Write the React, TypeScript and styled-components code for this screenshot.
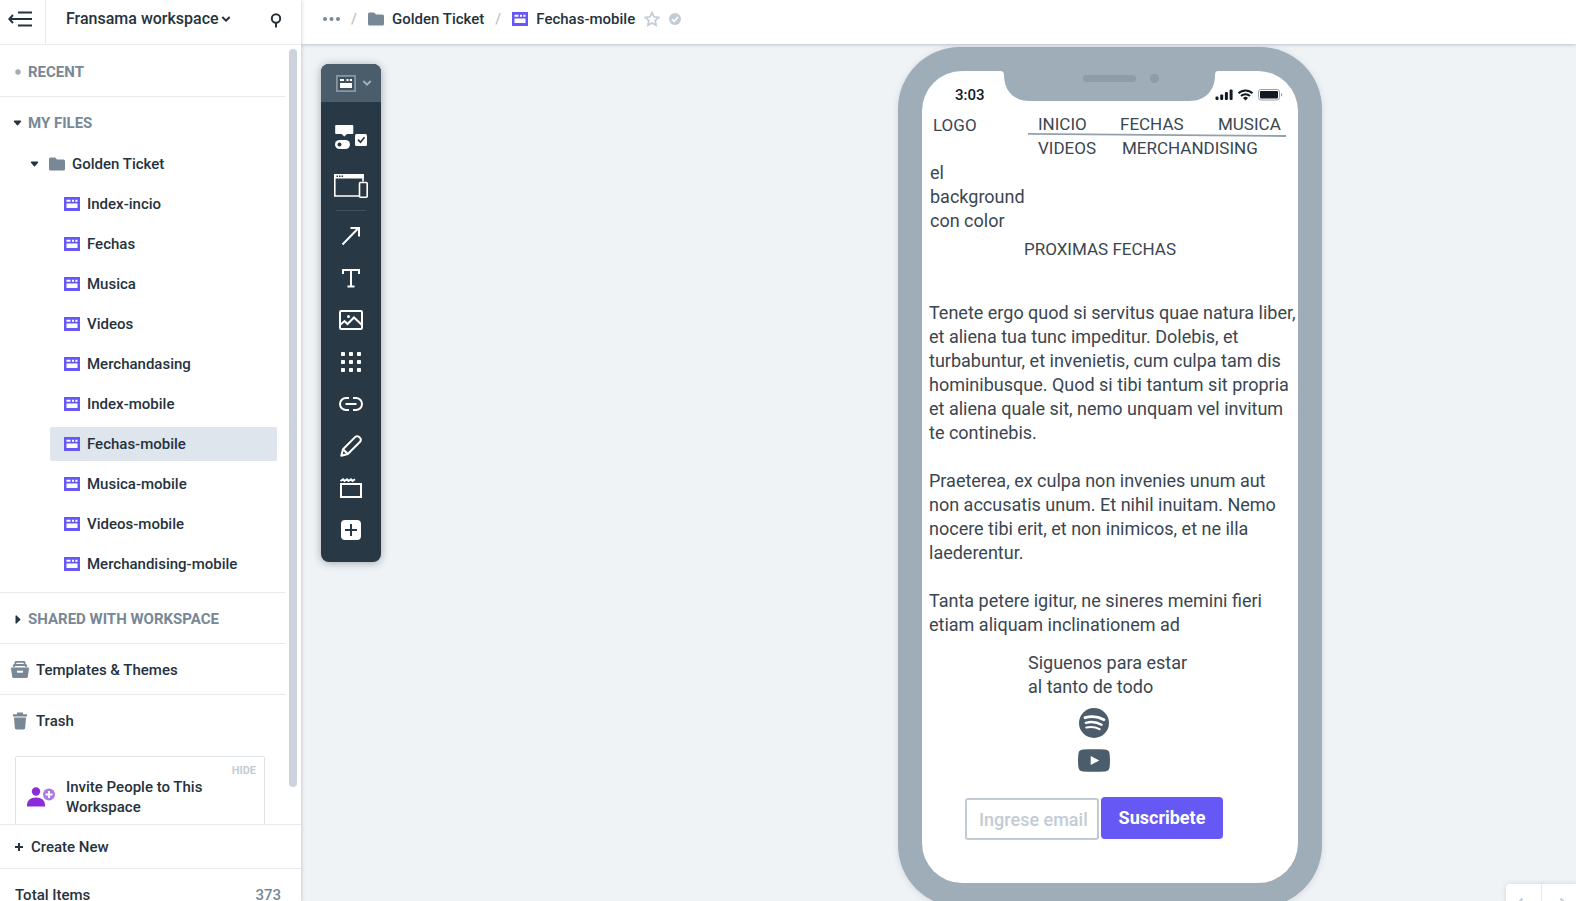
import React from "react";
import styled, { createGlobalStyle } from "styled-components";

const color = {
  ink: "#26323d",
  body: "#3a4650",
  slate: "#788896",
  mute: "#c3ccd4",
  line: "#e6eaee",
  canvas: "#eff3f6",
  tool: "#293845",
  toolHead: "#4b5c6a",
  frame: "#9fadb9",
  purple: "#6558f5",
};

const GlobalStyle = createGlobalStyle`
  * { box-sizing: border-box; }
  body {
    margin: 0;
    overflow: hidden;
    font-family: Roboto, "Liberation Sans", sans-serif;
    font-size: 15px;
    line-height: 20px;
    color: ${color.ink};
  }
  button, input { font: inherit; color: inherit; }
  button { border: 0; padding: 0; background: none; cursor: pointer; }
  a { color: inherit; text-decoration: none; }
  svg { display: block; flex: none; }
  ul, h1, h2, p { margin: 0; padding: 0; list-style: none; font-size: inherit; font-weight: inherit; }
`;

const Workspace = styled.div`
  display: grid;
  grid-template-columns: 301px minmax(0, 1fr);
  height: 100vh;
  overflow: hidden;
  background: ${color.canvas};
`;

/* ---------- sidebar ---------- */

const Sidebar = styled.aside`
  position: relative;
  z-index: 2;
  display: flex;
  flex-direction: column;
  min-height: 0;
  font-weight: 500;
  background: #fff;
  box-shadow: 0 0 4px rgba(40, 56, 70, 0.28);
`;

const SideHeader = styled.header`
  display: flex;
  flex: none;
  align-items: stretch;
  height: 45px;
  border-bottom: 1px solid ${color.line};
`;

const CollapseButton = styled.button`
  display: grid;
  place-items: center;
  width: 46px;
  padding-right: 6px;
  padding-bottom: 6px;
  border-right: 1px solid ${color.line};
`;

const WorkspaceButton = styled.button`
  display: flex;
  flex: 1;
  align-items: center;
  gap: 2px;
  padding: 0 0 6px 20px;
  font-size: 16px;
  font-weight: 500;
  white-space: nowrap;
`;

const SearchButton = styled.button`
  display: grid;
  place-items: center;
  width: 50px;
  padding-bottom: 3px;
`;

const ScrollArea = styled.div`
  display: flex;
  flex: 1;
  min-height: 0;
  overflow: hidden;
`;

const FileList = styled.nav`
  flex: 1;
  min-width: 0;
  padding-top: 1px;
`;

const ScrollTrack = styled.div`
  width: 16px;
  padding: 4px 4px 37px 4px;
`;

const ScrollThumb = styled.div`
  height: 100%;
  border-radius: 4px;
  background: #ccd3da;
`;

const Section = styled.section<{ $last?: boolean }>`
  border-bottom: ${(p) => (p.$last ? "0" : `1px solid ${color.line}`)};
`;

const SectionTitle = styled.button`
  display: flex;
  align-items: center;
  gap: 5px;
  width: 100%;
  height: 50px;
  padding-left: 12px;
  padding-top: 2px;
  color: ${color.slate};
  font-weight: 700;
  text-align: left;
`;

const Marker = styled.span`
  display: grid;
  place-items: center;
  width: 11px;
  height: 20px;
`;

const FolderRow = styled.button`
  display: flex;
  align-items: center;
  width: 100%;
  height: 34px;
  padding-left: 29px;
  font-weight: 500;

  svg + svg { margin: 0 7px 0 9px; }
`;

const Files = styled.ul`
  display: flex;
  flex-direction: column;
  gap: 6px;
  padding: 6px 8px 11px 50px;
`;

const FileLink = styled.a<{ $active?: boolean }>`
  display: flex;
  align-items: center;
  gap: 7px;
  height: 34px;
  padding-left: 14px;
  border-radius: 2px;
  background: ${(p) => (p.$active ? "#dfe5ed" : "transparent")};
`;

const UtilityLink = styled.a`
  display: flex;
  align-items: center;
  gap: 7px;
  height: 50px;
  padding-left: 11px;
  padding-top: 2px;
`;

const InviteCard = styled.div`
  display: grid;
  grid-template-columns: 28px 1fr;
  column-gap: 11px;
  width: 250px;
  margin: 11px 0 0 15px;
  padding: 6px 8px 20px 11px;
  border: 1px solid #dde3e8;
  border-radius: 2px;
`;

const HideButton = styled.button`
  grid-column: 1 / -1;
  justify-self: end;
  height: 14px;
  color: ${color.mute};
  font-size: 11px;
  font-weight: 700;
  line-height: 16px;
`;

const InviteText = styled.a`
  grid-column: 2;
`;

const InviteIconCell = styled.span`
  display: grid;
  align-items: center;
`;

const SideFooter = styled.footer`
  flex: none;
  height: 77px;
`;

const CreateButton = styled.button`
  display: flex;
  align-items: center;
  gap: 8px;
  width: 100%;
  height: 44px;
  padding-left: 15px;
  border-top: 1px solid ${color.line};
  font-weight: 500;
`;

const Totals = styled.div`
  display: flex;
  justify-content: space-between;
  padding: 16px 20px 0 15px;
  border-top: 1px solid ${color.line};

  span + span { color: ${color.slate}; }
`;

/* ---------- main area ---------- */

const Main = styled.main`
  display: flex;
  flex-direction: column;
  min-height: 0;
`;

const TopBar = styled.header`
  position: relative;
  z-index: 1;
  display: flex;
  flex: none;
  align-items: center;
  height: 44px;
  padding: 0 0 6px 22px;
  background: #fff;
  box-shadow: 0 1px 3px rgba(40, 56, 70, 0.25);
  font-weight: 500;
`;

const Crumb = styled.a`
  display: flex;
  align-items: center;
  gap: 8px;
`;

const Slash = styled.span`
  width: 28px;
  color: #bcc4cb;
  text-align: center;
`;

const CrumbAction = styled.button`
  margin-left: 9px;
`;

const Canvas = styled.div`
  position: relative;
  flex: 1;
  min-height: 0;
  overflow: hidden;
`;

const Toolbar = styled.div`
  position: absolute;
  top: 20px;
  left: 20px;
  display: flex;
  flex-direction: column;
  align-items: stretch;
  width: 60px;
  padding-bottom: 11px;
  border-radius: 8px;
  background: ${color.tool};
  box-shadow: 0 1px 8px rgba(40, 56, 70, 0.4);
  color: #fff;
`;

const ModeButton = styled.button`
  display: flex;
  align-items: center;
  gap: 6px;
  height: 38px;
  padding-left: 15px;
  border-radius: 8px 8px 0 0;
  background: ${color.toolHead};
`;

const Tool = styled.button<{ $tall?: boolean }>`
  display: flex;
  align-items: center;
  justify-content: ${(p) => (p.$tall ? "flex-start" : "center")};
  height: ${(p) => (p.$tall ? "49px" : "42px")};
  margin: ${(p) => (p.$tall ? "0 -2px" : "0")};
`;

const ToolGroup = styled.div`
  display: flex;
  flex-direction: column;
  margin: 0 15px;
  padding-top: 10px;
  border-bottom: 1px solid #42515e;

  & + & {
    padding-top: 4px;
    border: 0;
  }
`;

const Phone = styled.article`
  position: absolute;
  top: 3px;
  left: 597px;
  width: 424px;
  padding: 24px;
  border-radius: 62px;
  background: ${color.frame};
  box-shadow: 0 1px 6px rgba(40, 56, 70, 0.14);
`;

const Screen = styled.div`
  position: relative;
  height: 812px;
  border-radius: 40px;
  background: #fff;
  color: ${color.body};
  font-size: 18px;
  line-height: 24px;
`;

const Notch = styled.svg`
  position: absolute;
  top: 0;
  left: 78px;
`;

const StatusBar = styled.div`
  display: flex;
  align-items: center;
  justify-content: space-between;
  height: 41px;
  padding: 6px 15px 0 33px;
  color: #111a22;
  font-size: 15px;
  font-weight: 500;
`;

const SiteHeader = styled.div`
  position: relative;
  display: flex;
  padding: 0 0 0 11px;
  font-size: 17px;
`;

const Logo = styled.h1`
  width: 105px;
  padding-top: 1px;
`;

const MenuGrid = styled.div`
  display: flex;
  flex-direction: column;
`;

const MenuRow = styled.div<{ $cols: string }>`
  display: grid;
  grid-template-columns: ${(p) => p.$cols};
`;

const MenuRule = styled.svg`
  position: absolute;
  top: 20px;
  left: 106px;
`;

const Note = styled.p`
  padding: 1px 8px 0;
`;

const Heading = styled.h2`
  padding: 4px 0 0 102px;
  font-size: 17px;
`;

const Copy = styled.div`
  display: flex;
  flex-direction: column;
  gap: 24px;
  padding: 40px 0 0 7px;
  white-space: nowrap;
`;

const Follow = styled.p`
  padding: 14px 0 0 106px;
`;

const Socials = styled.div`
  display: flex;
  flex-direction: column;
  align-items: center;
  gap: 11px;
  width: 344px;
  padding-top: 9px;
`;

const Form = styled.form`
  display: flex;
  align-items: flex-start;
  gap: 2px;
  padding: 25px 0 0 43px;
`;

const EmailInput = styled.input`
  width: 134px;
  height: 42px;
  margin-top: 1px;
  padding: 0 0 0 12px;
  border: 2px solid ${color.mute};
  border-radius: 3px;
  background: #fff;
  font-weight: 500;

  &::placeholder { color: ${color.mute}; opacity: 1; }
`;

const SubmitButton = styled.button`
  width: 122px;
  height: 42px;
  border-radius: 4px;
  background: ${color.purple};
  color: #fff;
  font-weight: 700;
`;

const History = styled.div`
  position: absolute;
  right: 0;
  bottom: -21px;
  display: flex;
  border-radius: 4px 0 0 0;
  background: #fff;
  box-shadow: 0 0 5px rgba(40, 56, 70, 0.16);
`;

const HistoryButton = styled.button`
  display: grid;
  place-items: center;
  width: 35px;
  height: 38px;

  & + & { border-left: 1px solid ${color.line}; }
`;

/* ---------- icons ---------- */

const BoardIcon = () => (
  <svg width="16" height="14" viewBox="0 0 16 14" fill="#fff">
    <rect width="16" height="14" fill={color.purple} />
    <path d="M2.5 2.8h4v1.9h-4zM8 2.8h2v1.9H8zM11.3 2.8h2.2v1.9h-2.2zM2.5 6.6h11V11h-11z" />
  </svg>
);

const FolderIcon = () => (
  <svg width="16" height="14" viewBox="0 0 16 14" fill={color.slate}>
    <path d="M1.5 0.5H6l2 2h6.500a1.500 1.500 0 0 1 1.500 1.500v8a1.500 1.500 0 0 1-1.500 1.500h-13A1.500 1.500 0 0 1 0 12V2A1.500 1.500 0 0 1 1.500.5z" />
  </svg>
);

const Down = () => (
  <svg width="11" height="6" viewBox="0 0 11 6" fill={color.ink}>
    <path d="M2.500 0.500h6a.7.7 0 0 1 .5 1.200L6 5.300a.7.7 0 0 1-1 0L2 1.700A.7.7 0 0 1 2.500 .5z" />
  </svg>
);

const Right = () => (
  <svg width="6" height="9" viewBox="0 0 6 9" fill={color.ink}>
    <path d="M.5 1v7a.6.6 0 0 0 1 .5L5.200 5a.7.7 0 0 0 0-1L1.500.5a.6.6 0 0 0-1 .5z" />
  </svg>
);

const Chevron = ({ stroke }: { stroke: string }) => (
  <svg width="10" height="10" viewBox="0 0 10 10" fill="none" stroke={stroke} strokeWidth="2">
    <path d="M1.300 3 5 6.700 8.700 3" />
  </svg>
);

const SpotifyIcon = () => (
  <svg width="30" height="30" viewBox="0 0 30 30" fill="none" stroke="#fff" strokeLinecap="round">
    <circle cx="15" cy="15" r="15" fill="#4b5c6a" stroke="none" />
    <path d="M6 9.700c6.500-1.800 13.500-1 19 2" strokeWidth="2.800" />
    <path d="M6.800 14.800c5.500-1.500 11.200-.8 15.800 1.900" strokeWidth="2.400" />
    <path d="M7.300 19.500c4.800-1 9.300-.5 13.300 1.700" strokeWidth="2" />
  </svg>
);

const YoutubeIcon = () => (
  <svg width="32" height="23" viewBox="0 0 32 23">
    <path d="M5 .6C12 0 20 0 27 .6c3 .3 4.300 1.500 4.600 4.400.5 4.500.5 8.500 0 13-.3 2.900-1.600 4.100-4.600 4.400-7 .6-15 .6-22 0-3-.3-4.300-1.500-4.600-4.400-.5-4.500-.5-8.500 0-13C.7 2.100 2 .9 5 .6z" fill="#4b5c6a" />
    <path d="M12.700 7v9l8.600-4.500z" fill="#fff" />
  </svg>
);

const StatusIcons = () => (
  <svg width="68" height="14" viewBox="0 0 68 14" fill="#111a22">
    <rect x="0.500" y="8.500" width="3" height="3.500" rx="1" />
    <rect x="5.200" y="6.500" width="3" height="5.500" rx="1" />
    <rect x="9.900" y="4" width="3" height="8" rx="1" />
    <rect x="14.600" y="1.500" width="3" height="10.500" rx="1" />
    <g fill="none" stroke="#111a22" strokeWidth="1.900">
      <path d="M23.500 5.300a10 10 0 0 1 14 0" />
      <path d="M26 8a6.500 6.500 0 0 1 9 0" />
    </g>
    <path d="M28 10a3.700 3.700 0 0 1 5 0l-2.500 2.500z" />
    <rect x="43.500" y="1.500" width="21" height="10.500" rx="2.500" fill="none" stroke="#9aa3ab" />
    <rect x="45" y="3" width="18" height="7.500" rx="1" />
    <path d="M66 5v3.500c1-.3 1.300-1 1.300-1.700S67 5.300 66 5z" fill="#9aa3ab" />
  </svg>
);

const tools: { label: string; icon: React.ReactNode }[] = [
  {
    label: "Arrow",
    icon: (
      <svg width="20" height="20" viewBox="0 0 20 20" fill="none" stroke="#fff" strokeWidth="2">
        <path d="M1.500 18.500 17.500 2M9.500 2h8.500v8.500" />
      </svg>
    ),
  },
  {
    label: "Text",
    icon: (
      <svg width="20" height="20" viewBox="0 0 20 20" fill="none" stroke="#fff" strokeWidth="2">
        <path d="M2 6V2h16v4M10 2v16.500M6.500 18.500h7" />
      </svg>
    ),
  },
  {
    label: "Image",
    icon: (
      <svg width="24" height="20" viewBox="0 0 24 20" fill="none" stroke="#fff" strokeWidth="2">
        <rect x="1" y="1" width="22" height="18" rx="1.200" />
        <path d="m1.500 14.500 4-3.500 3 3 6.500-6.500 8 7.500" />
        <circle cx="9.500" cy="6.500" r="1.500" fill="#fff" stroke="none" />
      </svg>
    ),
  },
  {
    label: "Icons",
    icon: (
      <svg width="20" height="20" viewBox="0 0 20 20" fill="#fff">
        {[0, 8, 16].map((y) => [0, 8, 16].map((x) => <rect key={`${x}-${y}`} x={x} y={y} width="4" height="4" rx="0.800" />))}
      </svg>
    ),
  },
  {
    label: "Link",
    icon: (
      <svg width="24" height="14" viewBox="0 0 24 14" fill="none" stroke="#fff" strokeWidth="2">
        <path d="M10 1H7a6 6 0 0 0 0 12h3M14 1h3a6 6 0 0 1 0 12h-3" />
        <path d="M6.500 7h11" />
      </svg>
    ),
  },
  {
    label: "Draw",
    icon: (
      <svg width="22" height="22" viewBox="0 0 22 22" fill="none" stroke="#fff" strokeWidth="2" strokeLinejoin="round">
        <path d="M1.300 20.700 3 14.200 15.300 1.900a2.600 2.600 0 0 1 3.700 0l1.100 1.100a2.600 2.600 0 0 1 0 3.700L7.800 19z" />
        <path d="m3 14.200 4.800 4.800" />
      </svg>
    ),
  },
  {
    label: "Section",
    icon: (
      <svg width="24" height="20" viewBox="0 0 24 20" fill="none" stroke="#fff" strokeWidth="2">
        <rect x="2" y="6" width="20" height="13" />
        <path d="m1.500 3 2.500-1.700 1.500 1.700L8 1.300 9.500 3 12 1.300 13.500 3 16 1.300" strokeWidth="1.900" />
      </svg>
    ),
  },
  {
    label: "More",
    icon: (
      <svg width="20" height="20" viewBox="0 0 20 20">
        <rect width="20" height="20" rx="4" fill="#fff" />
        <path d="M10 4v12M4 10h12" stroke={color.tool} strokeWidth="2" />
      </svg>
    ),
  },
];

const files = [
  "Index-incio",
  "Fechas",
  "Musica",
  "Videos",
  "Merchandasing",
  "Index-mobile",
  "Fechas-mobile",
  "Musica-mobile",
  "Videos-mobile",
  "Merchandising-mobile",
];

const copy = [
  [
    "Tenete ergo quod si servitus quae natura liber,",
    "et aliena tua tunc impeditur. Dolebis, et",
    "turbabuntur, et invenietis, cum culpa tam dis",
    "hominibusque. Quod si tibi tantum sit propria",
    "et aliena quale sit, nemo unquam vel invitum",
    "te continebis.",
  ],
  [
    "Praeterea, ex culpa non invenies unum aut",
    "non accusatis unum. Et nihil inuitam. Nemo",
    "nocere tibi erit, et non inimicos, et ne illa",
    "laederentur.",
  ],
  ["Tanta petere igitur, ne sineres memini fieri", "etiam aliquam inclinationem ad"],
];

const Lines = ({ lines }: { lines: string[] }) => (
  <>
    {lines.map((line, i) => (
      <React.Fragment key={line}>
        {i > 0 && <br />}
        {line}
      </React.Fragment>
    ))}
  </>
);

const SidePanel = () => (
  <Sidebar>
    <SideHeader>
      <CollapseButton aria-label="Collapse sidebar">
        <svg width="24" height="16" viewBox="0 0 24 16" fill="none" stroke={color.ink} strokeWidth="2">
          <path d="M10 1.500h14M1.500 8H24M10 14.500h14M5 4 1.300 8 5 12" />
        </svg>
      </CollapseButton>
      <WorkspaceButton>
        Fransama workspace <Chevron stroke={color.ink} />
      </WorkspaceButton>
      <SearchButton aria-label="Search">
        <svg width="12" height="15" viewBox="0 0 12 15" fill="none" stroke={color.ink} strokeWidth="2">
          <circle cx="6" cy="5.500" r="4.200" />
          <path d="M6 9.500V14.500" />
        </svg>
      </SearchButton>
    </SideHeader>

    <ScrollArea>
      <FileList aria-label="Files">
        <Section>
          <SectionTitle>
            <Marker>
              <svg width="6" height="6" viewBox="0 0 6 6">
                <circle cx="3" cy="3" r="2.700" fill="#a3adb6" />
              </svg>
            </Marker>
            RECENT
          </SectionTitle>
        </Section>
        <Section>
          <SectionTitle>
            <Marker>
              <Down />
            </Marker>
            MY FILES
          </SectionTitle>
          <FolderRow>
            <Down />
            <FolderIcon />
            Golden Ticket
          </FolderRow>
          <Files>
            {files.map((name) => (
              <li key={name}>
                <FileLink href="#" $active={name === "Fechas-mobile"}>
                  <BoardIcon />
                  {name}
                </FileLink>
              </li>
            ))}
          </Files>
        </Section>
        <Section>
          <SectionTitle>
            <Marker>
              <Right />
            </Marker>
            SHARED WITH WORKSPACE
          </SectionTitle>
        </Section>
        <Section>
          <UtilityLink href="#">
            <svg width="18" height="18" viewBox="0 0 18 18" fill={color.slate}>
              <path d="M5 0h8a1.500 1.500 0 0 1 1.500 1.500V3h-1.800V1.800H5.300V3H3.500V1.500A1.500 1.500 0 0 1 5 0z" />
              <path d="M3.500 3h11A1.500 1.500 0 0 1 16 4.500V6h-2V4.900H4V6H2V4.500A1.500 1.500 0 0 1 3.500 3z" />
              <path d="M.8 6.500h16.400a.8.8 0 0 1 .8.900l-1.200 8.300A1.500 1.500 0 0 1 15.300 17H2.700a1.500 1.500 0 0 1-1.500-1.300L0 7.400a.8.8 0 0 1 .8-.9z" />
              <rect x="6" y="9.700" width="6" height="2" fill="#fff" />
            </svg>
            Templates &amp; Themes
          </UtilityLink>
        </Section>
        <Section $last>
          <UtilityLink href="#">
            <svg width="18" height="18" viewBox="0 0 18 18" fill={color.slate}>
              <path d="M6 0.500h6v1.700h4v2.200H2V2.200h4z" />
              <path d="M3 5.500h12l-.8 10.600a1.500 1.500 0 0 1-1.500 1.400H5.300a1.500 1.500 0 0 1-1.500-1.400z" />
            </svg>
            Trash
          </UtilityLink>
        </Section>
        <InviteCard>
          <HideButton>HIDE</HideButton>
          <InviteIconCell>
            <svg width="28" height="20" viewBox="0 0 28 20">
              <g fill="#8b2bd9">
                <circle cx="9" cy="4.500" r="4.200" />
                <path d="M0 19.500v-1.500C0 13.500 3.500 10.500 9 10.500s9 3 9 7.500v1.500z" />
              </g>
              <circle cx="22" cy="7.500" r="6" fill="#ac78e6" />
              <path d="M22 4v7M18.500 7.500h7" stroke="#fff" strokeWidth="2" />
            </svg>
          </InviteIconCell>
          <InviteText href="#">
            Invite People to This
            <br />
            Workspace
          </InviteText>
        </InviteCard>
      </FileList>
      <ScrollTrack>
        <ScrollThumb />
      </ScrollTrack>
    </ScrollArea>

    <SideFooter>
      <CreateButton>
        <svg width="8" height="8" viewBox="0 0 8 8" stroke={color.ink} strokeWidth="2">
          <path d="M4 0v8M0 4h8" />
        </svg>
        Create New
      </CreateButton>
      <Totals>
        <span>Total Items</span>
        <span>373</span>
      </Totals>
    </SideFooter>
  </Sidebar>
);

const Breadcrumbs = () => (
  <TopBar>
    <button aria-label="More folders">
      <svg width="17" height="4" viewBox="0 0 17 4" fill={color.slate}>
        <circle cx="2" cy="2" r="2" />
        <circle cx="8.500" cy="2" r="2" />
        <circle cx="15" cy="2" r="2" />
      </svg>
    </button>
    <Slash>/</Slash>
    <Crumb href="#">
      <FolderIcon />
      Golden Ticket
    </Crumb>
    <Slash>/</Slash>
    <Crumb href="#">
      <BoardIcon />
      Fechas-mobile
    </Crumb>
    <CrumbAction aria-label="Favourite">
      <svg width="16" height="16" viewBox="0 0 16 16" fill="none" stroke={color.mute} strokeWidth="1.700">
        <path d="m8 1.500 2 4.300 4.700.6-3.500 3.200.9 4.700L8 12l-4.100 2.300.9-4.700L1.300 6.400 6 5.800z" />
      </svg>
    </CrumbAction>
    <CrumbAction aria-label="Saved">
      <svg width="12" height="12" viewBox="0 0 12 12">
        <circle cx="6" cy="6" r="6" fill={color.mute} />
        <path d="m3 6.300 2.200 2L9 4" fill="none" stroke="#fff" strokeWidth="1.800" />
      </svg>
    </CrumbAction>
  </TopBar>
);

const ToolPalette = () => (
  <Toolbar role="toolbar" aria-label="Tools">
    <ModeButton aria-label="Wireframe mode">
      <svg width="20" height="17" viewBox="0 0 20 17" fill="#fff">
        <rect x="0.900" y="0.900" width="18.200" height="15.200" fill="#43515e" stroke="#8696a3" strokeWidth="1.800" />
        <path d="M4 4h4v2H4zM10.500 4h2v2h-2zM13.800 4h2.200v2h-2.200zM4 8h12v5H4z" />
      </svg>
      <Chevron stroke="#9fb0bd" />
    </ModeButton>
    <ToolGroup>
      <Tool $tall aria-label="Elements">
        <svg width="34" height="24" viewBox="-1 0 34 24" fill="#fff">
          <path d="M1 0h16.500a.8.8 0 0 1 .8.800v7.400a.8.8 0 0 1-.8.800H12l-2.700 2.500L6.600 9H1a.8.8 0 0 1-.8-.8V.8A.8.8 0 0 1 1 0z" />
          <rect y="15" width="15" height="9" rx="4.500" />
          <circle cx="4.500" cy="19.500" r="2" fill={color.tool} />
          <rect x="20" y="9" width="12" height="12" rx="1.500" />
          <path d="m23 14.700 2.500 2.500 4-5" fill="none" stroke={color.tool} strokeWidth="1.700" />
        </svg>
      </Tool>
      <Tool $tall aria-label="Frames">
        <svg width="34" height="24" viewBox="0 0 34 24" fill="none" stroke="#fff" strokeWidth="1.600">
          <path d="M25 22H.8V1H29v6.500" />
          <path d="M0 0h29.800v4.500H0z" fill="#fff" stroke="none" />
          <path d="M2.500 2.200h1.500M5 2.200h1.500M7.500 2.200h1.500" stroke={color.tool} />
          <rect x="25.500" y="8.500" width="7.700" height="14.700" rx="1" />
        </svg>
      </Tool>
    </ToolGroup>
    <ToolGroup>
      {tools.map((t) => (
        <Tool key={t.label} aria-label={t.label}>
          {t.icon}
        </Tool>
      ))}
    </ToolGroup>
  </Toolbar>
);

const PhoneMock = () => (
  <Phone>
    <Screen>
      <StatusBar>
        <span>3:03</span>
        <StatusIcons />
      </StatusBar>
      <Notch width="218" height="30" viewBox="0 0 218 30">
        <path d="M0-1v1c3 0 4 1.500 4 4 0 15 9 26 26 26h159c17 0 26-11 26-26 0-2.500 1-4 3-4v-1z" fill={color.frame} />
        <rect x="83" y="4" width="53" height="7" rx="3.500" fill="#8c9ca9" />
        <circle cx="154.500" cy="7.500" r="4.500" fill="#8c9ca9" />
      </Notch>
      <SiteHeader>
        <Logo>LOGO</Logo>
        <MenuGrid>
          <MenuRow $cols="82px 98px auto">
            <a href="#">INICIO</a>
            <a href="#">FECHAS</a>
            <a href="#">MUSICA</a>
          </MenuRow>
          <MenuRow $cols="84px auto">
            <a href="#">VIDEOS</a>
            <a href="#">MERCHANDISING</a>
          </MenuRow>
        </MenuGrid>
        <MenuRule width="258" height="6" viewBox="0 0 258 6">
          <path d="M0 1.800 258 4" stroke="#93a1ad" strokeWidth="1.800" />
        </MenuRule>
      </SiteHeader>
      <Note>
        <Lines lines={["el", "background", "con color"]} />
      </Note>
      <Heading>PROXIMAS FECHAS</Heading>
      <Copy>
        {copy.map((lines) => (
          <p key={lines[0]}>
            <Lines lines={lines} />
          </p>
        ))}
      </Copy>
      <Follow>
        <Lines lines={["Siguenos para estar", "al tanto de todo"]} />
      </Follow>
      <Socials>
        <a href="#" aria-label="Spotify">
          <SpotifyIcon />
        </a>
        <a href="#" aria-label="YouTube">
          <YoutubeIcon />
        </a>
      </Socials>
      <Form onSubmit={(e) => e.preventDefault()}>
        <EmailInput type="email" aria-label="Ingrese email" placeholder="Ingrese email" />
        <SubmitButton>Suscribete</SubmitButton>
      </Form>
    </Screen>
  </Phone>
);

export default function App() {
  return (
    <>
      <GlobalStyle />
      <Workspace>
        <SidePanel />
        <Main>
          <Breadcrumbs />
          <Canvas>
            <PhoneMock />
            <ToolPalette />
            <History>
              <HistoryButton aria-label="Undo">
                <svg width="14" height="10" viewBox="0 0 14 10" fill="none" stroke={color.mute} strokeWidth="2">
                  <path d="M14 4H2M5.500.5 2 4l3.500 3.500" />
                </svg>
              </HistoryButton>
              <HistoryButton aria-label="Redo">
                <svg width="14" height="10" viewBox="0 0 14 10" fill="none" stroke={color.mute} strokeWidth="2">
                  <path d="M0 4h12M8.500.5 12 4 8.500 7.500" />
                </svg>
              </HistoryButton>
            </History>
          </Canvas>
        </Main>
      </Workspace>
    </>
  );
}
